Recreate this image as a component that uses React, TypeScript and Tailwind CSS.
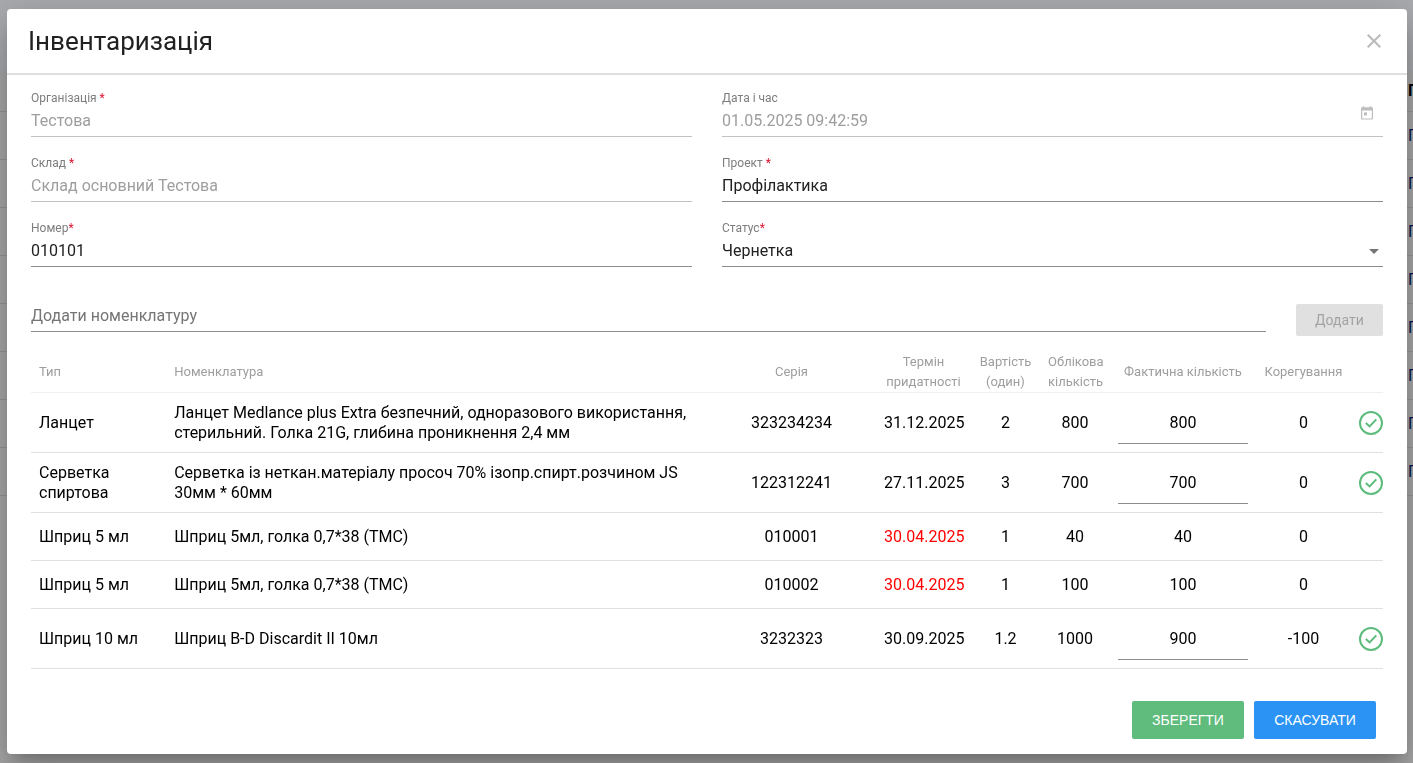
import { useState } from "react";

type Row = {
  type: string;
  name: string;
  series: string;
  expiry: string;
  expired?: boolean;
  price: string;
  booked: number;
  actual: string;
  editable?: boolean;
};

const initialRows: Row[] = [
  {
    type: "Ланцет",
    name: "Ланцет Medlance plus Extra безпечний, одноразового використання, стерильний. Голка 21G, глибина проникнення 2,4 мм",
    series: "323234234",
    expiry: "31.12.2025",
    price: "2",
    booked: 800,
    actual: "800",
    editable: true,
  },
  {
    type: "Серветка спиртова",
    name: "Серветка із неткан.матеріалу просоч 70% ізопр.спирт.розчином JS 30мм * 60мм",
    series: "122312241",
    expiry: "27.11.2025",
    price: "3",
    booked: 700,
    actual: "700",
    editable: true,
  },
  {
    type: "Шприц 5 мл",
    name: "Шприц 5мл, голка 0,7*38 (ТМС)",
    series: "010001",
    expiry: "30.04.2025",
    expired: true,
    price: "1",
    booked: 40,
    actual: "40",
  },
  {
    type: "Шприц 5 мл",
    name: "Шприц 5мл, голка 0,7*38 (ТМС)",
    series: "010002",
    expiry: "30.04.2025",
    expired: true,
    price: "1",
    booked: 100,
    actual: "100",
  },
  {
    type: "Шприц 10 мл",
    name: "Шприц B-D Discardit II 10мл",
    series: "3232323",
    expiry: "30.09.2025",
    price: "1.2",
    booked: 1000,
    actual: "900",
    editable: true,
  },
];

function CloseIcon() {
  return (
    <svg className="block h-[14px] w-[14px]" viewBox="0 0 14 14" fill="none" stroke="#bababa" strokeWidth="2">
      <path d="M0.7 0.7 13.3 13.3M13.3 0.7 0.7 13.3" />
    </svg>
  );
}

function CalendarIcon() {
  return (
    <svg className="block h-[14px] w-3" viewBox="0 0 12 14">
      <path
        fill="#bdbdbd"
        fillRule="evenodd"
        d="M1.8 0.2h1.4V1.2h5.6V0.2h1.4V1.2h0.6c.7 0 1.2.5 1.2 1.2v10c0 .7-.5 1.2-1.2 1.2H1.2C.5 13.6 0 13.1 0 12.4V2.4c0-.7.5-1.2 1.2-1.2h0.6zM1.2 4.4v8h9.6v-8z"
      />
      <path fill="#bdbdbd" d="M3 6.4h3v3H3z" />
    </svg>
  );
}

function CheckIcon() {
  return (
    <svg className="block h-6 w-6" viewBox="0 0 24 24" fill="none" stroke="#5dbb7c">
      <circle cx="12" cy="12" r="11" strokeWidth="2" />
      <path d="M6.8 12 10.6 15.4 17.3 8.4" strokeWidth="2" />
    </svg>
  );
}

type FieldProps = {
  id: string;
  label: string;
  mark?: string;
  value: string;
  disabled?: boolean;
  picker?: boolean;
};

function Field({ id, label, mark, value, disabled, picker }: FieldProps) {
  const [text, setText] = useState(value);
  return (
    <div className={`flex border-b ${disabled ? "border-[#c2c2c2]" : "border-[#8c8c8c]"}`}>
      <div className="flex min-w-0 flex-1 flex-col pb-[2px]">
        <label htmlFor={id} className="text-xs leading-4 text-[#7d7d7d]">
          {label}
          <span className="text-[#dc1431]">{mark}</span>
        </label>
        <input
          id={id}
          value={text}
          disabled={disabled}
          onChange={(e) => setText(e.target.value)}
          className={`h-7 w-full bg-transparent p-0 text-base outline-none ${disabled ? "text-[#9e9e9e]" : "text-[#212121]"}`}
        />
      </div>
      {picker && (
        <button type="button" aria-label="Календар" disabled={disabled} className="mr-[10px] self-center">
          <CalendarIcon />
        </button>
      )}
    </div>
  );
}

function Backdrop() {
  const rows = [1, 2, 3, 4, 5, 6, 7, 8];
  return (
    <div aria-hidden="true" className="fixed inset-0 -z-10 bg-[#a9a9a9]">
      <div className="h-[71px] bg-[#a9abae]" />
      <div className="flex h-[41px] items-center justify-end border-b border-[#969696]">
        <span className="w-[5px] overflow-hidden font-bold text-black">П</span>
      </div>
      {rows.map((n) => (
        <div key={n} className="flex h-12 items-center justify-end border-b border-[#969696]">
          <span className="w-[5px] overflow-hidden text-[#00134d]">П</span>
        </div>
      ))}
    </div>
  );
}

const th = "px-2 text-center font-normal";
const td = "px-2 text-center";

export default function App() {
  const [rows, setRows] = useState(initialRows);

  const setActual = (index: number, actual: string) =>
    setRows((list) => list.map((row, i) => (i === index ? { ...row, actual } : row)));

  return (
    <div className="isolate min-h-screen pt-[9px] pr-[6px] pb-[9px] pl-[7px] font-['Roboto','Liberation_Sans',sans-serif]">
      <Backdrop />
      <div
        role="dialog"
        aria-labelledby="dialog-title"
        className="rounded bg-white shadow-[0_11px_15px_-7px_rgba(0,0,0,0.2),0_24px_38px_3px_rgba(0,0,0,0.14),0_9px_46px_8px_rgba(0,0,0,0.12)]"
      >
        <header className="flex h-[66px] items-center justify-between border-b-2 border-[#dedede] pr-[26px] pl-[21px]">
          <h1 id="dialog-title" className="text-[26px] leading-8 text-[#212121]">
            Інвентаризація
          </h1>
          <button type="button" aria-label="Закрити">
            <CloseIcon />
          </button>
        </header>

        <form className="px-6 pt-[15px] pb-[15px]" onSubmit={(e) => e.preventDefault()}>
          <div className="grid grid-cols-2 gap-x-[30px] gap-y-[18px]">
            <Field id="org" label="Організація" mark=" *" value="Тестова" disabled />
            <Field id="date" label="Дата і час" value="01.05.2025 09:42:59" disabled picker />
            <Field id="store" label="Склад" mark=" *" value="Склад основний Тестова" disabled />
            <Field id="project" label="Проект" mark=" *" value="Профілактика" />
            <Field id="number" label="Номер" mark="*" value="010101" />
            <div className="flex flex-col border-b border-[#8c8c8c]">
              <label htmlFor="status" className="text-xs leading-4 text-[#7d7d7d]">
                Статус<span className="text-[#dc1431]">*</span>
              </label>
              <div className="relative">
                <select
                  id="status"
                  className="block h-[30px] w-full appearance-none bg-transparent p-0 text-base text-[#212121] outline-none"
                >
                  <option>Чернетка</option>
                </select>
                <svg
                  className="pointer-events-none absolute top-[13px] right-1 h-[5px] w-[10px]"
                  viewBox="0 0 10 5"
                  fill="#757575"
                >
                  <path d="M0 0h10L5 5z" />
                </svg>
              </div>
            </div>
          </div>

          <div className="mt-8 flex items-start gap-[30px]">
            <input
              aria-label="Додати номенклатуру"
              placeholder="Додати номенклатуру"
              className="h-[33px] min-w-0 flex-1 border-b border-[#8c8c8c] bg-transparent p-0 text-base outline-none placeholder:text-[#757575]"
            />
            <button
              type="button"
              disabled
              className="mt-[5px] h-8 w-[87px] rounded-xs bg-[#e0e0e0] text-sm text-[#a3a3a3]"
            >
              Додати
            </button>
          </div>

          <table className="mt-4 w-full table-fixed border-collapse text-base leading-5 text-black">
            <colgroup>
              <col className="w-[10%]" />
              <col className="w-[40%]" />
              <col />
              <col className="w-[95px]" />
              <col className="w-[69px]" />
              <col className="w-[70px]" />
              <col className="w-[146px]" />
              <col className="w-[95px]" />
              <col className="w-8" />
            </colgroup>
            <thead>
              <tr className="h-10 border-b border-[#f0f0f0] text-[13px] text-[#9e9e9e]">
                <th className="px-2 text-left font-normal">Тип</th>
                <th className="px-2 text-left font-normal">Номенклатура</th>
                <th className={th}>Серія</th>
                <th className={th}>Термін придатності</th>
                <th className={th}>Вартість (один)</th>
                <th className={th}>Облікова кількість</th>
                <th className={th}>Фактична кількість</th>
                <th className={th}>Корегування</th>
                <th aria-label="Дії" />
              </tr>
            </thead>
            <tbody>
              {rows.map((row, i) => (
                <tr key={i} className={`border-b border-[#e0e0e0] ${row.editable ? "h-[60px]" : "h-12"}`}>
                  <td className="px-2">{row.type}</td>
                  <td className="px-2">{row.name}</td>
                  <td className={td}>{row.series}</td>
                  <td className={row.expired ? "px-2 text-center text-[#ff0000]" : td}>{row.expiry}</td>
                  <td className={td}>{row.price}</td>
                  <td className={td}>{row.booked}</td>
                  <td className={td}>
                    {row.editable ? (
                      <input
                        aria-label={`Фактична кількість, ${row.type}`}
                        value={row.actual}
                        onChange={(e) => setActual(i, e.target.value)}
                        className="block h-[43px] w-full border-b border-[#8c8c8c] bg-transparent p-0 text-center outline-none"
                      />
                    ) : (
                      row.actual
                    )}
                  </td>
                  <td className={td}>{Number(row.actual) - row.booked}</td>
                  <td className="pl-2">
                    {row.editable && (
                      <button type="button" aria-label="Підтвердити" className="block">
                        <CheckIcon />
                      </button>
                    )}
                  </td>
                </tr>
              ))}
            </tbody>
          </table>

          <div className="mt-8 flex justify-end gap-[10px] pr-[7px] font-['Liberation_Sans',Arial,sans-serif] text-sm text-white">
            <button type="submit" className="h-[38px] w-28 rounded-xs bg-[#5fbc7d]">
              ЗБЕРЕГТИ
            </button>
            <button type="button" className="h-[38px] w-[122px] rounded-xs bg-[#2b93f3]">
              СКАСУВАТИ
            </button>
          </div>
        </form>
      </div>
    </div>
  );
}
